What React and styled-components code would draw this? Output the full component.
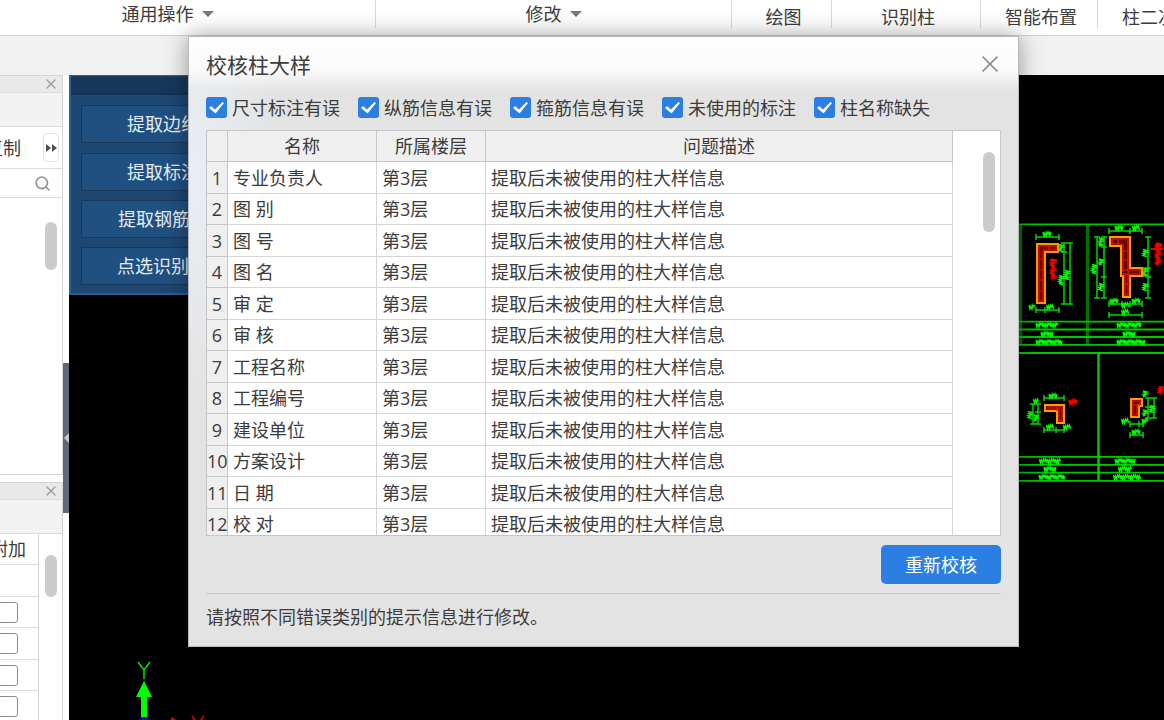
import React from 'react';
import styled, {createGlobalStyle} from "styled-components";
import {Search, X} from "lucide-react";


const GlobalStyle = createGlobalStyle`
  * {
    box-sizing: border-box;
  }

  body {
    margin: 0;
    color: #3c3c3c;
    font-family: "Open Sans", "Noto Sans CJK SC", sans-serif;
    font-size: 18px;
    line-height: 24px;
  }

  button, input {
    margin: 0;
    padding: 0;
    font: inherit;
    color: inherit;
  }
`

const Page = styled.div`
  position: relative;
  height: 100vh;
  overflow: hidden;
  display: flex;
  flex-direction: column;
  background: #fff;
`

/* ribbon */
const Ribbon = styled.header`
  flex: none;
  height: 36px;
  display: flex;
  align-items: flex-start;
  overflow: hidden;
  border-bottom: 1px solid #d4d4d4;
`

const RibbonGroup = styled.button`
  flex: ${props => props.$width ? "none" : "1 0 150px"};
  width: ${props => props.$width ? props.$width + "px" : "auto"};
  height: 28px;
  padding-top: ${props => props.$menu ? 0 : 6}px;
  padding-right: ${props => props.$right || 0}px;
  padding-left: ${props => props.$left || 0}px;
  display: flex;
  align-items: center;
  justify-content: ${props => props.$width ? "center" : "flex-start"};
  gap: 8px;
  border: 0;
  border-right: 1px solid #d9d9d9;
  background: none;
  white-space: nowrap;
`

const Caret = styled.span`
  border: 6px solid transparent;
  border-top-color: #777;
  border-bottom: 0;
`

const SubBar = styled.div`
  flex: none;
  height: 39px;
  background: #f1f1f1;
`

const Main = styled.main`
  flex: 1;
  min-height: 0;
  display: flex;
`

/* left side */
const Sidebar = styled.aside`
  flex: none;
  width: 63px;
  display: flex;
  flex-direction: column;
  gap: 7px;
  overflow: hidden;
`

const Panel = styled.section`
  flex: none;
  height: ${props => props.$height}px;
  display: flex;
  flex-direction: column;
  border: 1px solid #d4d4d4;
  border-left: 0;
`

const PanelBar = styled.div`
  flex: none;
  height: ${props => props.$height}px;
  display: flex;
  align-items: center;
  justify-content: flex-end;
  gap: 22px;
  padding-right: ${props => props.$pad || 0}px;
  border-bottom: 1px solid #dcdcdc;
  background: ${props => props.$bg || "#fff"};
  white-space: nowrap;
  overflow: hidden;
`

const ToolLabel = styled.span`
  flex: none;
`

const IconButton = styled.button`
  flex: none;
  display: flex;
  border: 0;
  background: none;
  color: ${props => props.$color || "#a0a0a0"};
`

const MoreButton = styled.button`
  flex: none;
  width: 16px;
  height: 29px;
  display: flex;
  align-items: center;
  justify-content: center;
  border: 1px solid #e2e2e2;
  border-radius: 4px;
  background: #fff;
`

const PanelBody = styled.div`
  flex: 1;
  min-height: 0;
  display: flex;
  justify-content: flex-end;
`

const ScrollTrack = styled.div`
  flex: none;
  width: ${props => props.$width}px;
  padding: ${props => props.$top}px 5px 0 0;
  display: flex;
  justify-content: flex-end;
`

const ScrollThumb = styled.div`
  width: 12px;
  height: ${props => props.$height}px;
  border-radius: 6px;
  background: #cbcbcb;
`

const AttrList = styled.div`
  width: 39px;
  border-right: 1px solid #d8d8d8;
`

const AttrRow = styled.label`
  height: 31px;
  display: flex;
  align-items: center;
  justify-content: flex-end;
  padding-right: 12px;
  border-bottom: 1px solid #dcdcdc;
  overflow: hidden;
  white-space: nowrap;

  &:nth-child(even) {
    height: 32px;
  }
`

const EmptyBox = styled.input`
  appearance: none;
  flex: none;
  margin-right: 8px;
  width: 21px;
  height: 21px;
  border: 1px solid #8c8c8c;
  border-radius: 3px;
  background: #fff;
`

const Splitter = styled.div`
  flex: none;
  width: 6px;
  padding-top: 288px;
`

const SplitHandle = styled.button`
  width: 6px;
  height: 150px;
  display: flex;
  align-items: center;
  justify-content: flex-end;
  border: 0;
  background: #5e6a75;

  &:before {
    content: "";
    border: 5px solid transparent;
    border-right-color: #c4c9ce;
    border-left: 0;
  }
`

/* drawing area */
const Canvas = styled.div`
  position: relative;
  flex: 1;
  overflow: hidden;
  background: #000;
`

const Drawing = styled.svg`
  position: absolute;
  top: 148px;
  right: 0;
`

const Axes = styled.svg`
  position: absolute;
  left: 55px;
  bottom: 0;
`

const Palette = styled.div`
  position: absolute;
  top: 0;
  left: 0;
  width: 188px;
  border: 2px solid #28609a;
  border-width: 1px 2px 2px;
  background: #1e4771;
`

const PaletteBar = styled.div`
  height: 19px;
  border-top: 1px solid #1b4169;
  border-bottom: 2px solid #143152;
  background: #17375b;
`

const PaletteList = styled.div`
  display: flex;
  flex-direction: column;
  gap: 9px;
  padding: 10px 10px 8px;
`

const PaletteButton = styled.button`
  height: 38px;
  display: flex;
  align-items: center;
  justify-content: center;
  gap: 8px;
  border: 1px solid #17385d;
  background: #205080;
  color: #e4ebf2;

  &:first-child {
    margin-bottom: 1px;
  }
`

/* dialog */
const Dialog = styled.section`
  position: absolute;
  top: 36px;
  left: 188px;
  right: 145px;
  padding: 0 17px 17px;
  border: 1px solid #b9b9b9;
  background:
    linear-gradient(#fefefe 0, #fbfbfb 32px, rgba(251, 251, 251, 0) 54px),
    radial-gradient(ellipse 90px 230px at 0 140px, #e9eef5, rgba(233, 238, 245, 0)),
    #e3e3e3;
  box-shadow: 0 0 22px rgba(0, 0, 0, 0.38);
`

const DialogHead = styled.div`
  height: 60px;
  padding-bottom: 4px;
  display: flex;
  align-items: center;
  justify-content: space-between;
`

const DialogTitle = styled.h1`
  margin: 0;
  font-size: 21px;
  font-weight: 400;
  line-height: 28px;
`

const CloseButton = styled(IconButton)`
  margin-right: -3px;
  padding-bottom: 2px;
`

const Filters = styled.div`
  display: flex;
  gap: 18px;
  height: 33px;
  white-space: nowrap;
`

const Filter = styled.label`
  height: 21px;
  display: flex;
  align-items: center;
  gap: 5px;
`

const CheckWrap = styled.span`
  display: grid;
  place-items: center;

  & > * {
    grid-area: 1 / 1;
  }

  svg {
    pointer-events: none;
  }
`

const CheckInput = styled.input`
  appearance: none;
  width: 21px;
  height: 21px;
  border-radius: 3px;
  background: #fff;

  &:checked {
    background: #2b7fe2;
  }
`

const TableBox = styled.div`
  height: 406px;
  display: flex;
  border: 1px solid #c6c6c6;
  background: #fff;
  overflow: hidden;
`

const TableArea = styled.div`
  flex: 1;
`

const Table = styled.table`
  width: 100%;
  table-layout: fixed;
  border-collapse: separate;
  border-spacing: 0;

  th, td {
    height: 32px;
    padding: 0 0 0 5px;
    border-right: 1px solid #d6d6d6;
    border-bottom: 1px solid #d6d6d6;
    font-weight: 400;
    text-align: left;
    white-space: nowrap;
  }

  tr:nth-child(even) > * {
    height: 31px;
  }

  thead th {
    height: 31px;
    padding: 0;
    border-color: #c6c6c6;
    background: #efefef;
    text-align: center;
  }

  tbody th {
    padding: 0;
    border-color: #c6c6c6;
    background: #efefef;
    text-align: center;
  }
`

const Col = styled.col`
  width: ${props => props.$width ? props.$width + "px" : "auto"};
`

const Actions = styled.div`
  display: flex;
  justify-content: flex-end;
  padding: 9px 0;
  border-bottom: 1px solid #cccccc;
`

const Primary = styled.button`
  width: 120px;
  height: 39px;
  border: 0;
  border-radius: 5px;
  background: #2b7fe2;
  color: #fff;
`

const Hint = styled.p`
  margin: 0;
  padding-top: 11px;
`


const ribbon = [
    {text: "通用操作", width: 376, menu: true, right: 40},
    {text: "修改", width: 356, menu: true},
    {text: "绘图", width: 100, left: 4},
    {text: "识别柱", width: 149, left: 4},
    {text: "智能布置", width: 117, left: 4},
    {text: "柱二次编辑", left: 24},
];

const filters = ["尺寸标注有误", "纵筋信息有误", "箍筋信息有误", "未使用的标注", "柱名称缺失"];

const names = [
    "专业负责人", "图 别", "图 号", "图 名", "审 定", "审 核",
    "工程名称", "工程编号", "建设单位", "方案设计", "日 期", "校 对",
];

// [x1, y1, x2, y2, inner tick positions]
const dims = [
    [1036, 237, 1059, 237, []],
    [1064, 243, 1064, 304, [252]],
    [1070, 243, 1070, 304, []],
    [1036, 310, 1059, 310, [1045]],
    [1109, 231, 1142, 231, [1130]],
    [1097, 237, 1097, 298, []],
    [1104, 237, 1104, 298, [247, 277]],
    [1148, 237, 1148, 298, [268, 277]],
    [1109, 304, 1142, 304, [1122, 1130]],
    [1109, 315, 1142, 315, []],
    [1044, 398, 1064, 398, []],
    [1033, 404, 1033, 424, []],
    [1038, 404, 1038, 424, [412]],
    [1044, 430, 1064, 430, [1056]],
    [1148, 398, 1148, 418, [407]],
    [1154, 398, 1154, 418, []],
    [1130, 424, 1143, 424, [1139]],
    [1130, 435, 1143, 435, []],
];

// centre and width of the small dimension values
const flatMarks = [
    [1047, 234, 8], [1032, 307, 6], [1050, 307, 7], [1119, 228, 8], [1136, 228, 7],
    [1114, 301, 8], [1125, 305, 7], [1136, 301, 8], [1125, 312, 7], [1053, 396, 8],
    [1036, 401, 5], [1050, 427, 7], [1067, 427, 7], [1125, 421, 7], [1145, 421, 6], [1136, 432, 8],
];

const uprightMarks = [
    [1061, 248, 7], [1061, 280, 9], [1067, 275, 9], [1094, 269, 9], [1101, 242, 8],
    [1101, 262, 6], [1101, 287, 7], [1145, 253, 7], [1145, 272, 8], [1145, 287, 7],
    [1030, 415, 7], [1036, 418, 6], [1145, 394, 6], [1145, 413, 6], [1152, 409, 7],
];

const captions = [
    [1047, 325, 22], [1047, 334, 12], [1049, 342, 26],
    [1129, 325, 24], [1129, 334, 12], [1131, 342, 28],
    [1050, 461, 21], [1050, 469, 12], [1052, 477, 26],
    [1125, 461, 20], [1125, 469, 13], [1127, 477, 27],
];

const shapes = [
    "M1037 244H1058V252H1045V303H1037Z",
    "M1110 237H1130V268H1142V276H1130V297H1123V276H1121V246H1110Z",
    "M1045 405H1064V423H1057V411H1045Z",
    "M1131 399H1142V406H1139V417H1131Z",
];

const rise = [4, -3, 3, -4, 2, -2, 4, -4];

// zigzag stroke that stands in for handwriting too small to read
const scribble = (x, y, size, upright) => {
    let d = upright ? `M${x - 2} ${y - size / 2}` : `M${x - size / 2} ${y - 2}`;
    for (let i = 0; i < size; i++) {
        d += upright ? `l${rise[i % 8]} 1` : `l1 ${rise[i % 8]}`;
    }
    return d;
};

const Dimension = ({x1, y1, x2, y2, ticks}) => {
    const flat = y1 === y2;
    const stops = flat ? [x1, ...ticks, x2] : [y1, ...ticks, y2];
    const d = stops.map(s => flat ? `M${s} ${y1 - 3}v6` : `M${x1 - 3} ${s}h6`).join("");
    return <path d={`M${x1} ${y1}L${x2} ${y2}${d}`} />;
};

const ColumnDrawing = () => (
    <Drawing width="146" height="260" viewBox="1018 223 146 260" fill="none" aria-hidden="true">
        <g stroke="#007400" strokeWidth="3">
            <path d="M1020.5 224V345M1087.5 224V345M1098.5 353V481" />
        </g>
        <g stroke="#00c800" strokeWidth="1.8">
            <path d="M1018 224.3H1164M1018 353H1164M1098.5 353V481" />
            <path d="M1018 321.7H1164M1018 329.5H1164M1018 337H1164M1018 344.8H1164" />
            <path d="M1018 456.8H1164M1018 464.8H1164M1018 472.6H1164M1018 480.8H1164" />
        </g>
        <g stroke="#00d800" strokeWidth="1.5">
            {dims.map(([x1, y1, x2, y2, ticks], i) => (
                <Dimension key={i} x1={x1} y1={y1} x2={x2} y2={y2} ticks={ticks} />
            ))}
        </g>
        <g stroke="#00ff00" strokeWidth="1.4">
            {flatMarks.map(([x, y, w], i) => <path key={i} d={scribble(x, y, w)} />)}
            {uprightMarks.map(([x, y, h], i) => <path key={i} d={scribble(x, y, h, true)} />)}
            {captions.map(([x, y, w], i) => <path key={i} d={scribble(x, y, w)} />)}
        </g>
        {shapes.map(d => (
            <path key={d} d={d} fill="#6a0000" stroke="#ff9c00" strokeWidth="2" />
        ))}
        <g stroke="#f01800" strokeWidth="1.2">
            <path d="M1039 246H1056V250H1043V301H1039ZM1039 259h4M1039 270h4M1039 280h4M1039 291h4M1049 246v4" />
            <path d="M1112 239H1128V295H1125V274M1112 239V244H1123V272M1123 251h5M1123 260h5M1123 270h17v4h-17M1125 284h3M1118 239v5" />
            <path d="M1047 407H1062V421H1059V409H1047M1057 407v4M1133 401h7v3h-3v11h-4zM1133 405h7" />
        </g>
        <g stroke="#f00000" strokeWidth="1.8">
            <path d={scribble(1053, 269, 20, true)} />
            <path d={scribble(1158, 254, 22, true)} />
            <path d={scribble(1073, 402, 8)} />
            <path d={scribble(1161, 390, 7, true)} />
            <path d="M1050 260h7M1151 249h12M1155 245h7" />
        </g>
    </Drawing>
);

const AxisIcon = () => (
    <Axes width="90" height="64" viewBox="124 656 90 64" aria-hidden="true">
        <path d="M144 681l8 16h-5v23h-6v-23h-5z" fill="#0f0" />
        <circle cx="144" cy="724" r="7" fill="#0000c8" />
        <path d="M171 717l14 7-14 6z" fill="#e00000" />
        <path d="M138 662l6 8 6-8M144 670v9" fill="none" stroke="#00dc00" strokeWidth="1.6" />
        <path d="M192 716l11 14M204 716l-11 14" fill="none" stroke="#e00000" strokeWidth="1.6" />
    </Axes>
);

const CheckMark = () => (
    <svg width="21" height="21" viewBox="0 0 21 21" aria-hidden="true">
        <path d="M3 11l2-2 4 3.5L16.5 5l1.5 1L9.5 16.5z" fill="#fff" />
    </svg>
);

const LeftPanels = () => (
    <Sidebar>
        <Panel $height={400}>
            <PanelBar $height={17} $bg="#e9e9e9" $pad={3}>
                <IconButton aria-label="关闭"><X size={16} strokeWidth={2} /></IconButton>
            </PanelBar>
            <PanelBar $height={34} $bg="#f2f2f2" />
            <PanelBar $height={42} $pad={3}>
                <ToolLabel>复制</ToolLabel>
                <MoreButton aria-label="更多">
                    <svg width="12" height="8" viewBox="0 0 12 8">
                        <path d="M1 0l5 4-5 4zM7 0l5 4-5 4z" fill="#4a5058" />
                    </svg>
                </MoreButton>
            </PanelBar>
            <PanelBar $height={29} $pad={11}>
                <IconButton $color="#9a9a9a" aria-label="搜索"><Search size={17} strokeWidth={2.6} /></IconButton>
            </PanelBar>
            <PanelBody>
                <ScrollTrack $width={24} $top={24}><ScrollThumb $height={48} /></ScrollTrack>
            </PanelBody>
        </Panel>

        <Panel $height={400}>
            <PanelBar $height={17} $bg="#e9e9e9" $pad={3}>
                <IconButton aria-label="关闭"><X size={16} strokeWidth={2} /></IconButton>
            </PanelBar>
            <PanelBar $height={34} $bg="#f2f2f2" />
            <PanelBody>
                <AttrList>
                    <AttrRow>附加</AttrRow>
                    <AttrRow />
                    {[1, 2, 3, 4, 5].map(n => (
                        <AttrRow key={n}><EmptyBox type="checkbox" aria-label={"附加 " + n} /></AttrRow>
                    ))}
                </AttrList>
                <ScrollTrack $width={23} $top={21}><ScrollThumb $height={42} /></ScrollTrack>
            </PanelBody>
        </Panel>
    </Sidebar>
);

const CheckDialog = () => (
    <Dialog role="dialog" aria-labelledby="dialog-title">
        <DialogHead>
            <DialogTitle id="dialog-title">校核柱大样</DialogTitle>
            <CloseButton $color="#858585" aria-label="关闭"><X size={28} strokeWidth={1.6} absoluteStrokeWidth /></CloseButton>
        </DialogHead>

        <Filters>
            {filters.map(text => (
                <Filter key={text}>
                    <CheckWrap>
                        <CheckInput type="checkbox" defaultChecked />
                        <CheckMark />
                    </CheckWrap>
                    {text}
                </Filter>
            ))}
        </Filters>

        <TableBox>
            <TableArea>
                <Table>
                    <colgroup>
                        <Col $width={21} />
                        <Col $width={149} />
                        <Col $width={109} />
                        <Col />
                    </colgroup>
                    <thead>
                        <tr>
                            <th aria-label="序号" />
                            <th>名称</th>
                            <th>所属楼层</th>
                            <th>问题描述</th>
                        </tr>
                    </thead>
                    <tbody>
                        {names.map((name, i) => (
                            <tr key={name}>
                                <th>{i + 1}</th>
                                <td>{name}</td>
                                <td>第3层</td>
                                <td>提取后未被使用的柱大样信息</td>
                            </tr>
                        ))}
                    </tbody>
                </Table>
            </TableArea>
            <ScrollTrack $width={47} $top={21}><ScrollThumb $height={80} /></ScrollTrack>
        </TableBox>

        <Actions>
            <Primary>重新校核</Primary>
        </Actions>
        <Hint>请按照不同错误类别的提示信息进行修改。</Hint>
    </Dialog>
);

const App = () => {
    return (
        <Page>
            <GlobalStyle />
            <Ribbon>
                {ribbon.map(item => (
                    <RibbonGroup
                        key={item.text}
                        $width={item.width}
                        $menu={item.menu}
                        $left={item.left}
                        $right={item.right}
                    >
                        {item.text}
                        {item.menu && <Caret />}
                    </RibbonGroup>
                ))}
            </Ribbon>
            <SubBar />

            <Main>
                <LeftPanels />
                <Splitter>
                    <SplitHandle aria-label="折叠" />
                </Splitter>
                <Canvas>
                    <ColumnDrawing />
                    <AxisIcon />
                    <Palette>
                        <PaletteBar />
                        <PaletteList>
                            <PaletteButton>提取边线</PaletteButton>
                            <PaletteButton>提取标注</PaletteButton>
                            <PaletteButton>提取钢筋线</PaletteButton>
                            <PaletteButton>点选识别<Caret /></PaletteButton>
                        </PaletteList>
                    </Palette>
                </Canvas>
            </Main>

            <CheckDialog />
        </Page>
    );
};

export default App;
